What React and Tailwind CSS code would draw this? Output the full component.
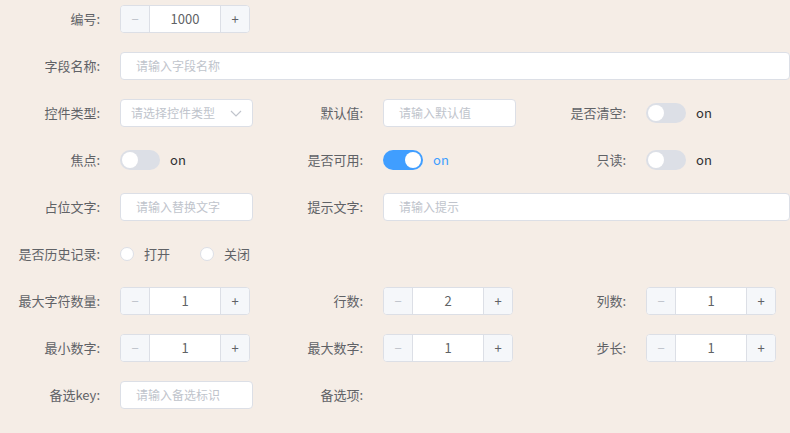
const font = { fontFamily: '"Microsoft YaHei", "Noto Sans CJK SC", "Liberation Sans", sans-serif' };

function Label({ children }) {
  return <div className="w-[100px] shrink-0 text-right text-[13px] text-[#606266]">{children}</div>;
}

function Field({ label, children, span }) {
  return (
    <div className={"flex h-7 items-center " + (span ? "col-span-3" : "")}>
      <Label>{label}</Label>
      <div className="ml-[20px] flex flex-1 items-center">{children}</div>
    </div>
  );
}

function Num({ value }) {
  return (
    <div className="flex h-7 w-[130px] overflow-hidden rounded border border-[#dcdfe6] bg-white text-[13px]">
      <div className="flex w-[29px] items-center justify-center border-r border-[#dcdfe6] bg-[#f5f7fa] text-[#c0c4cc]">−</div>
      <div className="flex flex-1 items-center justify-center text-[#606266]">{value}</div>
      <div className="flex w-[29px] items-center justify-center border-l border-[#dcdfe6] bg-[#f5f7fa] text-[#606266]">+</div>
    </div>
  );
}

function Input({ ph, w = "w-[133px]" }) {
  return (
    <div className={"flex h-7 items-center rounded border border-[#dcdfe6] bg-white px-[15px] text-[12px] text-[#c0c4cc] " + w}>{ph}</div>
  );
}

function Switch({ on }) {
  return (
    <div className="flex items-center">
      <div className={"flex h-5 w-10 items-center rounded-full p-[2px] " + (on ? "justify-end bg-[#409eff]" : "bg-[#dcdfe6]")}>
        <div className="h-4 w-4 rounded-full bg-white" />
      </div>
      <span className={"ml-[10px] text-[13px] font-normal " + (on ? "text-[#409eff]" : "text-[#303133]")}>on</span>
    </div>
  );
}

function Radio({ label }) {
  return (
    <div className="mr-[30px] flex items-center text-[13px] text-[#606266]">
      <div className="h-[14px] w-[14px] rounded-full border border-[#dcdfe6] bg-white" />
      <span className="ml-[10px]">{label}</span>
    </div>
  );
}

export default function App() {
  return (
    <div style={font} className="h-[433px] w-[790px] bg-[#f5ede6] pt-[5px]">
      <div className="grid grid-cols-[263px_263px_264px] gap-y-[19px] pr-[12px]">
        <Field label="编号:"><Num value="1000" /></Field>
        <div /><div />
        <Field label="字段名称:" span><Input ph="请输入字段名称" w="w-full" /></Field>
        <Field label="控件类型:">
          <div className="flex h-7 w-[133px] items-center justify-between rounded border border-[#dcdfe6] bg-white pl-[10px] pr-[10px] text-[12px] text-[#c0c4cc]">
            请选择控件类型
            <svg width="12" height="12" viewBox="0 0 12 12"><path d="M1 4l5 5 5-5" fill="none" stroke="#c0c4cc" strokeWidth="1.2" /></svg>
          </div>
        </Field>
        <Field label="默认值:"><Input ph="请输入默认值" /></Field>
        <Field label="是否清空:"><Switch /></Field>
        <Field label="焦点:"><Switch /></Field>
        <Field label="是否可用:"><Switch on /></Field>
        <Field label="只读:"><Switch /></Field>
        <Field label="占位文字:"><Input ph="请输入替换文字" /></Field>
        <div className="col-span-2 flex h-7 items-center">
          <Label>提示文字:</Label>
          <div className="ml-[20px] flex-1"><Input ph="请输入提示" w="w-full" /></div>
        </div>
        <Field label="是否历史记录:" span><Radio label="打开" /><Radio label="关闭" /></Field>
        <Field label="最大字符数量:"><Num value="1" /></Field>
        <Field label="行数:"><Num value="2" /></Field>
        <Field label="列数:"><Num value="1" /></Field>
        <Field label="最小数字:"><Num value="1" /></Field>
        <Field label="最大数字:"><Num value="1" /></Field>
        <Field label="步长:"><Num value="1" /></Field>
        <Field label="备选key:"><Input ph="请输入备选标识" /></Field>
        <Field label="备选项:"><div /></Field>
      </div>
    </div>
  );
}
